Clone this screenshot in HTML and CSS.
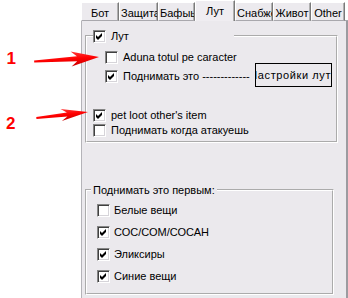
FILE: index.html
```html
<!DOCTYPE html>
<html lang="ru">
<head>
  <meta charset="UTF-8">
  <meta name="viewport" content="width=device-width, initial-scale=1">
  <title>Лут</title>
  <link rel="stylesheet" href="styles.css">
</head>
<body>
  <div class="screen">
    <div class="gutter"></div>

    <div class="tabctl">
      <div class="tabs">
        <div class="tab tab-bot">Бот</div>
        <div class="tab tab-def">Защита</div>
        <div class="tab tab-buff">Бафыь</div>
        <div class="tab tab-loot active">Лут</div>
        <div class="tab tab-supply">Снабжение</div>
        <div class="tab tab-pet">Живот</div>
        <div class="tab tab-other">Other</div>
        <div class="tab-rest"></div>
      </div>

      <div class="page">
        <fieldset class="group group-loot">
          <legend class="group-title">
            <span class="box on"><svg viewBox="0 0 7 7" width="7" height="7"><path d="M0 2 L2 4 L6 0 L6 3 L2 7 L0 5 Z"/></svg></span>
            <span>Лут</span>
          </legend>
          <div class="check sub first"><span class="box"></span>Aduna totul pe caracter</div>
          <div class="check sub second">
            <span class="box on"><svg viewBox="0 0 7 7" width="7" height="7"><path d="M0 2 L2 4 L6 0 L6 3 L2 7 L0 5 Z"/></svg></span>
            <span>Поднимать это -------------</span>
            <button class="btn"><span>Настройки лута</span></button>
          </div>
          <div class="check top pet"><span class="box on"><svg viewBox="0 0 7 7" width="7" height="7"><path d="M0 2 L2 4 L6 0 L6 3 L2 7 L0 5 Z"/></svg></span>pet loot other's item</div>
          <div class="check top"><span class="box"></span>Поднимать когда атакуешь</div>
        </fieldset>

        <fieldset class="group group-first">
          <legend class="group-title text">Поднимать это первым:</legend>
          <div class="check item"><span class="box"></span>Белые вещи</div>
          <div class="check item"><span class="box on"><svg viewBox="0 0 7 7" width="7" height="7"><path d="M0 2 L2 4 L6 0 L6 3 L2 7 L0 5 Z"/></svg></span>СОС/СОМ/СОСАН</div>
          <div class="check item"><span class="box on"><svg viewBox="0 0 7 7" width="7" height="7"><path d="M0 2 L2 4 L6 0 L6 3 L2 7 L0 5 Z"/></svg></span>Эликсиры</div>
          <div class="check item"><span class="box on"><svg viewBox="0 0 7 7" width="7" height="7"><path d="M0 2 L2 4 L6 0 L6 3 L2 7 L0 5 Z"/></svg></span>Синие вещи</div>
        </fieldset>
      </div>
    </div>

    <!-- red marks drawn over the dialog -->
    <svg class="notes" viewBox="0 0 348 298" width="348" height="298">
      <defs>
        <linearGradient id="redfill" x1="0" y1="0" x2="0" y2="1">
          <stop offset="0" stop-color="#ff3a3a"/>
          <stop offset="0.5" stop-color="#f00"/>
          <stop offset="1" stop-color="#c80000"/>
        </linearGradient>
      </defs>
      <text class="num" x="6.5" y="63.5">1</text>
      <text class="num" x="6" y="128.5">2</text>
      <g transform="translate(99 57) rotate(-4)">
        <path fill="url(#redfill)" d="M0 0 L-28 -7.5 L-22 -2.4 L-65 -1 L-65 1 L-22 2.6 L-28 7.5 Z"/>
      </g>
      <g transform="translate(88 112) rotate(-6.5)">
        <path fill="url(#redfill)" d="M0 0 L-27 -6 L-21 -2 L-52 -0.8 L-52 1 L-21 2.2 L-27 6 Z"/>
      </g>
    </svg>
  </div>
</body>
</html>
```

FILE: styles.css
```css
body {
  margin: 0;
  background: #fff;
  font: 11px "Liberation Sans", Arial, sans-serif;
  color: #000;
  overflow: hidden;
}
.screen {
  position: relative;
  display: flex;
  width: 348px;
  height: 298px;
}
.gutter {
  width: 81px;
  flex: none;
}
.tabctl {
  width: 267px;
  flex: none;
  display: flex;
  flex-direction: column;
}

/* tab strip */
.tabs {
  display: flex;
  align-items: flex-end;
  height: 21px;
}
.tab {
  box-sizing: border-box;
  height: 19px;
  padding: 4px 1px 0;
  line-height: 13px;
  background: #eceaee;
  border-top: 1px solid #fff;
  border-left: 1px solid #fff;
  border-right: 1px solid #7a7a7a;
  border-bottom: 1px solid #a9a8ad;
  box-shadow: inset -1px 0 0 #b0b0b0;
  display: flex;
  justify-content: safe center;
  overflow: hidden;
  white-space: nowrap;
}
.tab.active {
  height: 21px;
  border-bottom: none;
  background: #efedf1;
}
.tab-bot { width: 38px; }
.tab-def { width: 39px; }
.tab-buff { width: 37px; }
.tab-loot { width: 40px; }
.tab-supply { width: 38px; }
.tab-pet { width: 38px; }
.tab-other { width: 34px; }
.tab-rest {
  flex: 1;
  height: 1px;
  background: #a9a8ad;
}

/* tab page */
.page {
  flex: 1;
  background: #ebe9ed;
  border-left: 1px solid #b4b3b8;
  border-right: 2px solid #9c9ba0;
}
.group {
  box-sizing: border-box;
  min-width: 0;
  margin: 0 0 0 3px;
  border: 2px groove #fff;
}
.group-loot {
  width: 253px;
  margin-top: 8px;
  padding: 0 0 4px;
}
.group-first {
  width: 249px;
  margin-top: 40px;
  padding: 0 0 10px;
}
.group-title {
  display: flex;
  align-items: center;
  gap: 5px;
  height: 14px;
  line-height: 14px;
  padding: 0;
}
.group-loot .group-title {
  width: 141px;
  margin-left: 6px;
}
.group-title.text {
  margin-left: 4px;
  padding: 0 2px;
}

/* checkbox rows */
.check {
  display: flex;
  align-items: center;
  gap: 5px;
  height: 13px;
  line-height: 13px;
  white-space: nowrap;
}
.check.sub { margin-left: 18px; }
.check.sub.first { margin-top: 8px; }
.check.sub.second { margin-top: 6px; margin-right: 4px; }
.check.top { margin-left: 6px; margin-top: 2px; }
.check.top.pet { margin-top: 26px; }
.check.item { margin: 9px 0 0 10px; gap: 4px; }
.check.item:first-of-type { margin-top: 7px; }

.box {
  box-sizing: border-box;
  width: 13px;
  height: 13px;
  flex: none;
  background: #fff;
  border: 1px solid;
  border-color: #858585 #fff #fff #858585;
  box-shadow: inset 1px 1px 0 #404040, inset -1px -1px 0 #d6d4d9;
  display: flex;
  align-items: center;
  justify-content: center;
}
.box svg {
  display: block;
  fill: #000;
}

.btn {
  box-sizing: border-box;
  width: 77px;
  height: 24px;
  margin: -3px 0 0 auto;
  padding: 0;
  border: 1px solid #000;
  background: #ebe9ed;
  font: inherit;
  letter-spacing: 0.6px;
  color: #000;
  display: flex;
  align-items: center;
  justify-content: center;
  overflow: hidden;
  white-space: nowrap;
}
.btn span {
  flex: none;
}

/* annotations */
.notes {
  position: absolute;
  left: 0;
  top: 0;
  pointer-events: none;
}
.num {
  font: bold 17px "Liberation Sans", Arial, sans-serif;
  fill: #f00;
}
```
